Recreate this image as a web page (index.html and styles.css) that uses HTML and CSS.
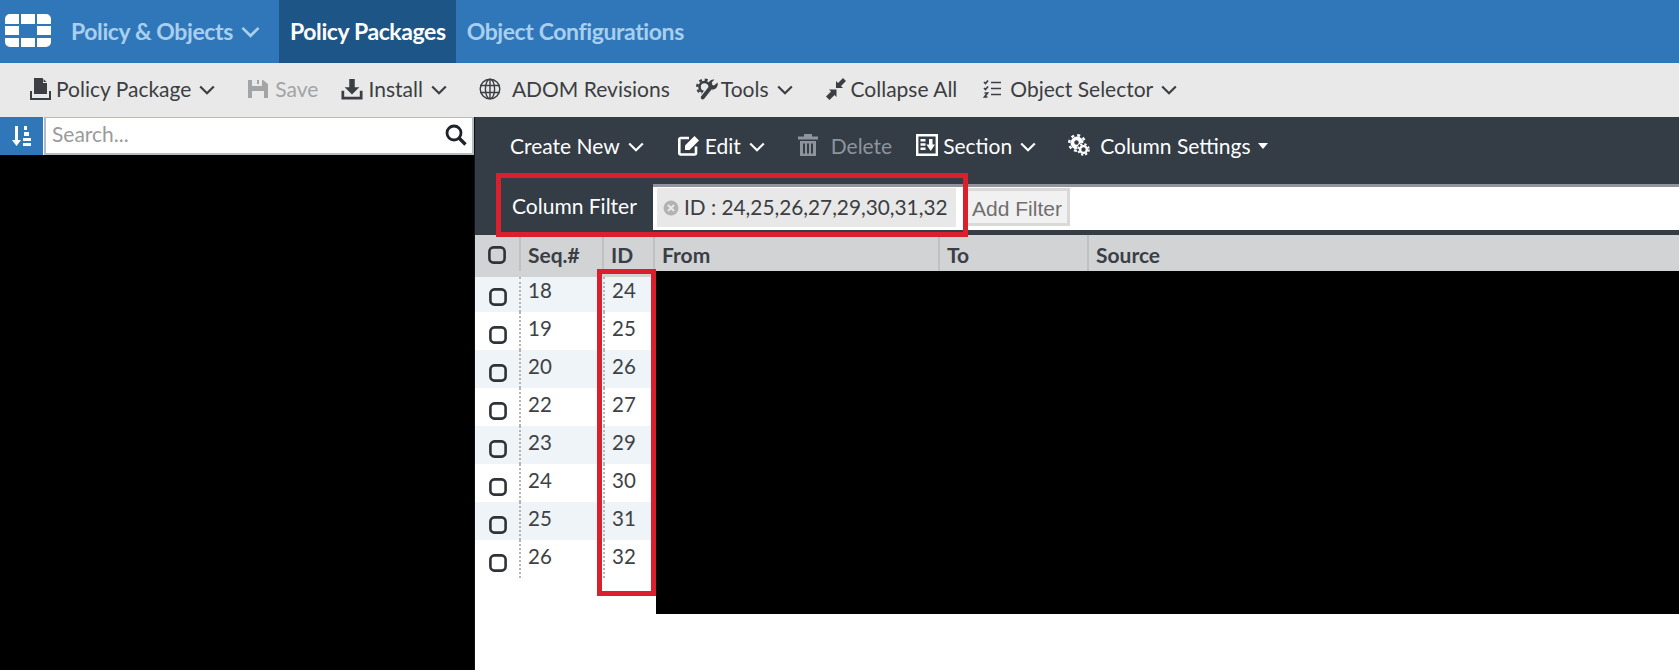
FILE: index.html
```html
<!DOCTYPE html>
<html lang="en">
<head>
<meta charset="utf-8">
<title>Policy Packages</title>
<link rel="stylesheet" href="styles.css">
</head>
<body>
<svg class="defs" width="0" height="0" aria-hidden="true">
  <symbol id="chev" viewBox="0 0 16 10"><path d="M1.2 1.5 8 8.2 14.8 1.5" fill="none" stroke="currentColor" stroke-width="2.2"/></symbol>
  <symbol id="box" viewBox="0 0 18 18"><rect x="1.4" y="1.4" width="15.2" height="15.2" rx="4" fill="none" stroke="currentColor" stroke-width="2.6"/></symbol>
</svg>
<div class="app">
  <header class="nav">
    <svg class="logo" viewBox="0 0 46 33">
      <path fill="#fff" d="M5 0h9v10H0V5a5 5 0 0 1 5-5zM16 0h14v10H16zM32 0h9a5 5 0 0 1 5 5v5H32zM0 12h14v9H0zM32 12h14v9H32zM0 24h14v9H5a5 5 0 0 1-5-5zM16 24h14v9H16zM32 24h14v4a5 5 0 0 1-5 5h-9z"/>
    </svg>
    <div class="nav-menu">Policy &amp; Objects<svg class="chev nav-chev"><use href="#chev"/></svg></div>
    <div class="nav-tab active">Policy Packages</div>
    <div class="nav-tab">Object Configurations</div>
  </header>

  <div class="toolbar">
    <div class="tool t1">
      <svg class="ic pkg" viewBox="0 0 22 24"><path fill="currentColor" d="M5 1h8.500L18 5.500V17H5z"/><path fill="none" stroke="currentColor" stroke-width="2" d="M2 14v8h19v-8"/><path fill="#e9e9e9" d="M14 0.500h1L19 5v1h-5z"/><path fill="currentColor" d="M14.500 2 17.500 5h-3z"/></svg>
      <span>Policy Package</span><svg class="chev"><use href="#chev"/></svg>
    </div>
    <div class="tool t2 muted">
      <svg class="ic save" viewBox="0 0 20 20"><path fill="currentColor" d="M0 1h15l5 4v14H0zM4 1v6h10V1h-3v4H9V1zM4 12v7h12v-7z"/></svg>
      <span>Save</span>
    </div>
    <div class="tool t3">
      <svg class="ic install" viewBox="0 0 24 24"><path fill="currentColor" d="M9 1h6v9h5l-8 8-8-8h5z"/><path fill="none" stroke="currentColor" stroke-width="3" d="M2 14v8h20v-8"/></svg>
      <span>Install</span><svg class="chev"><use href="#chev"/></svg>
    </div>
    <div class="tool t4">
      <svg class="ic globe" viewBox="0 0 22 22"><g fill="none" stroke="currentColor" stroke-width="1.4"><circle cx="11" cy="11" r="9.8"/><ellipse cx="11" cy="11" rx="4.6" ry="9.8"/><path d="M11 1v20M1.5 7.5h19M1.5 14.500h19"/></g></svg>
      <span>ADOM Revisions</span>
    </div>
    <div class="tool t5">
      <svg class="ic" viewBox="0 0 22 22">
        <g fill="none" stroke="currentColor">
          <circle cx="8.500" cy="9" r="5" stroke-width="2.600"/>
          <circle cx="8.500" cy="9" r="7.300" stroke-width="2.400" stroke-dasharray="3 2.730"/>
        </g>
        <path d="M7 19.500 15.500 8" fill="none" stroke="#e9e9e9" stroke-width="6.500"/>
        <path fill="currentColor" d="M21.500 4.500 18 7.500l-2.200-.8L15.500 4.500 18.500 1.500a5.500 5.500 0 0 0-6 7.500L5 18.500a2 2 0 0 0 3 2.500l7.500-9.500a5.500 5.500 0 0 0 6-7z"/>
      </svg>
      <span>Tools</span><svg class="chev"><use href="#chev"/></svg>
    </div>
    <div class="tool t6">
      <svg class="ic" viewBox="0 0 22 22"><path fill="currentColor" d="M1 18.500l5-5-2-2h7.500V19l-2-2-5 5zM21 3l-5 5 2 2h-7V3l2 2 5-5z"/></svg>
      <span>Collapse All</span>
    </div>
    <div class="tool t7">
      <svg class="ic list" viewBox="0 0 18 20"><path fill="none" stroke="currentColor" stroke-width="1.700" d="M1 3l1.500 1.500L5 1.500M1 9l1.500 1.500L5 7.500M1.500 14h3l-3 4h3M8 3.500h10M8 9.500h10M8 15.500h10"/></svg>
      <span>Object Selector</span><svg class="chev"><use href="#chev"/></svg>
    </div>
  </div>

  <div class="work">
    <aside class="side">
      <div class="side-top">
        <div class="sort">
          <svg class="sort-ic" viewBox="0 0 20 22"><path fill="#fff" d="M3 1h3v14h3l-4.500 6L0 15h3zM12 1h3v4h-3zM12 7h5v4h-5zM11 13h8v3h-8zM11 18h8v3h-8z"/></svg>
        </div>
        <div class="search">
          <span class="search-ph">Search...</span>
          <svg class="search-ic" viewBox="0 0 22 22"><circle cx="9" cy="9" r="7" fill="none" stroke="#1f2327" stroke-width="2.800"/><path d="M14 14l6.500 6.500" stroke="#1f2327" stroke-width="3.400" fill="none"/></svg>
        </div>
      </div>
      <div class="side-redact"></div>
    </aside>

    <main class="main">
      <div class="dark">
        <div class="actions">
          <div class="act a1"><span>Create New</span><svg class="chev"><use href="#chev"/></svg></div>
          <div class="act a2">
            <svg class="ic" viewBox="0 0 22 22"><path fill="none" stroke="currentColor" stroke-width="2.600" d="M18 12.500V19a1.500 1.500 0 0 1-1.500 1.500h-14A1.500 1.500 0 0 1 1.300 19V5.500A1.500 1.500 0 0 1 2.800 4H11"/><path fill="currentColor" d="M7 11.500 16.500 2l4.500 4.500L11.500 16H7z"/></svg>
            <span>Edit</span><svg class="chev"><use href="#chev"/></svg>
          </div>
          <div class="act a3 off">
            <svg class="ic" viewBox="0 0 22 24"><path fill="currentColor" fill-rule="evenodd" d="M7 1h8v2.500h6v3H1v-3h6zM3 8h16v15H3zM6 10.500V20.500h2V10.500zM10 10.500V20.500h2V10.500zM14 10.500V20.500h2V10.500z"/></svg>
            <span>Delete</span>
          </div>
          <div class="act a4">
            <svg class="ic" viewBox="0 0 22 22"><path fill="none" stroke="currentColor" stroke-width="2.400" d="M1.200 1.200h19.600v19.600H1.200z"/><path fill="currentColor" d="M4.500 5h5v2.500h-5zM4.500 9.300h5v2.500h-5zM4.500 13.600h5v2.500h-5zM13 5h3.500v5.500h2.500L14.700 17l-4.300-6.500H13z"/></svg>
            <span>Section</span><svg class="chev"><use href="#chev"/></svg>
          </div>
          <div class="act a5">
            <svg class="ic" viewBox="0 0 22 22">
              <circle cx="9" cy="9" r="6.500" fill="currentColor"/>
              <circle cx="9" cy="9" r="7.800" fill="none" stroke="currentColor" stroke-width="2.400" stroke-dasharray="3 3.120"/>
              <circle cx="8.500" cy="8.500" r="2.200" fill="#343c46"/>
              <circle cx="15.500" cy="15.500" r="6.800" fill="#343c46"/>
              <circle cx="15.500" cy="15.500" r="3.400" fill="none" stroke="currentColor" stroke-width="2.400"/>
              <circle cx="15.500" cy="15.500" r="5.300" fill="none" stroke="currentColor" stroke-width="2" stroke-dasharray="2.200 2"/>
            </svg>
            <span>Column Settings</span><i class="caret"></i>
          </div>
        </div>
        <div class="filter-row">
          <div class="filter-label">Column Filter</div>
          <div class="filter-field">
            <div class="chip">
              <svg class="chip-x" viewBox="0 0 16 16"><circle cx="8" cy="8" r="7.500" fill="#b3b3b3"/><path d="M5 5l6 6M11 5l-6 6" stroke="#e8e8e8" stroke-width="2"/></svg>
              <span>ID : 24,25,26,27,29,30,31,32</span>
            </div>
            <div class="add-filter">Add Filter</div>
          </div>
        </div>
      </div>

      <div class="table">
        <div class="thead">
          <div class="th th-check"><svg class="check"><use href="#box"/></svg></div>
          <div class="th">Seq.#</div>
          <div class="th">ID</div>
          <div class="th">From</div>
          <div class="th">To</div>
          <div class="th th-last">Source</div>
        </div>
        <div class="tbody">
          <div class="row"><div class="c-check"><svg class="check"><use href="#box"/></svg></div><div class="c-seq">18</div><div class="c-id">24</div></div>
          <div class="row"><div class="c-check"><svg class="check"><use href="#box"/></svg></div><div class="c-seq">19</div><div class="c-id">25</div></div>
          <div class="row"><div class="c-check"><svg class="check"><use href="#box"/></svg></div><div class="c-seq">20</div><div class="c-id">26</div></div>
          <div class="row"><div class="c-check"><svg class="check"><use href="#box"/></svg></div><div class="c-seq">22</div><div class="c-id">27</div></div>
          <div class="row"><div class="c-check"><svg class="check"><use href="#box"/></svg></div><div class="c-seq">23</div><div class="c-id">29</div></div>
          <div class="row"><div class="c-check"><svg class="check"><use href="#box"/></svg></div><div class="c-seq">24</div><div class="c-id">30</div></div>
          <div class="row"><div class="c-check"><svg class="check"><use href="#box"/></svg></div><div class="c-seq">25</div><div class="c-id">31</div></div>
          <div class="row"><div class="c-check"><svg class="check"><use href="#box"/></svg></div><div class="c-seq">26</div><div class="c-id">32</div></div>
        </div>
      </div>

      <div class="redact"></div>
      <div class="mark mark-filter"></div>
      <div class="mark mark-id"></div>
    </main>
  </div>
</div>
</body>
</html>
```

FILE: styles.css
```css
* { box-sizing: border-box; }
html, body { margin: 0; height: 100%; overflow: hidden; }
body { font-family: Lato, "Open Sans", sans-serif; font-size: 21px; color: #3b3e42; background: #fff; }
.defs { position: absolute; }
.app { width: 1679px; height: 670px; display: flex; flex-direction: column; }

.chev { width: 16px; height: 10px; flex: none; margin-left: 8px; margin-top: 3px; }

/* top nav */
.nav { height: 63px; flex: none; display: flex; align-items: stretch; background: #3077b9; font-size: 23px; font-weight: 700; color: #a9cfef; letter-spacing: -0.4px; }
.logo { width: 46px; height: 33px; margin: 14px 0 0 5px; flex: none; }
.nav-menu { display: flex; align-items: center; margin-left: 20px; width: 208px; padding-bottom: 2px; }
.nav-chev { width: 19px; height: 12px; margin-left: 8px; }
.nav-tab { display: flex; align-items: center; padding: 0 10px 2px 11px; }
.nav-tab.active { background: #1e5587; color: #fff; }

/* grey toolbar */
.toolbar { height: 54px; flex: none; display: flex; align-items: center; padding-bottom: 3px; background: #e9e9e9; color: #3b3e42; font-size: 21px; }
.tool { display: flex; align-items: center; }
.tool .ic { width: 22px; height: 22px; flex: none; margin-right: 5px; }
.tool .pkg { height: 24px; }
.muted { color: #a2a4a6; }
.t1 { margin-left: 29px; }
.t2 { margin-left: 33px; }
.tool.t2 .save { width: 20px; height: 20px; margin-right: 7px; }
.t3 { margin-left: 23px; }
.t4 { margin-left: 32px; }
.tool.t4 .ic { margin-right: 11px; }
.t5 { margin-left: 26px; }
.tool.t5 .ic { margin-right: 3px; }
.t6 { margin-left: 32px; }
.tool.t6 .ic { margin-right: 4px; }
.t7 { margin-left: 26px; }
.tool.t7 .list { width: 18px; height: 20px; margin-right: 9px; }

.work { flex: 1; display: flex; min-height: 0; }

/* sidebar */
.side { width: 474px; flex: none; display: flex; flex-direction: column; }
.side-top { height: 38px; flex: none; display: flex; background: #fff; }
.sort { width: 43px; flex: none; background: #3077b9; display: flex; align-items: center; justify-content: center; }
.sort-ic { width: 22px; height: 22px; }
.search { flex: 1; display: flex; align-items: center; justify-content: space-between; border: 2px solid #b4bcc3; border-top-width: 1px; padding: 0 5px 4px 6px; margin-left: 1px; }
.search-ph { color: #9b9b9b; }
.search-ic { width: 22px; height: 22px; margin-top: 3px; }
.side-redact { flex: 1; background: #000; }

/* main */
.main { flex: 1; position: relative; background: #fff; border-left: 1px solid #111; min-width: 0; }
.dark { background: #343c46; color: #fff; height: 118px; display: flex; flex-direction: column; }
.actions { height: 58px; flex: none; display: flex; align-items: center; padding-bottom: 2px; }
.act { display: flex; align-items: center; }
.act .ic { width: 22px; height: 22px; flex: none; margin-right: 7px; }
.a1 { margin-left: 35px; }
.a2 { margin-left: 34px; }
.act.a2 .ic { margin-right: 5px; }
.a3 { margin-left: 32px; }
.act.a3 .ic { margin-right: 12px; height: 24px; }
.off { color: #8d949b; }
.a4 { margin-left: 24px; }
.act.a4 .ic { margin-right: 5px; }
.a5 { margin-left: 32px; }
.act.a5 .ic { margin-right: 10px; }
.caret { width: 0; height: 0; border: 5px solid transparent; border-top: 6px solid #fff; border-bottom: 0; margin-left: 7px; margin-top: 2px; }

.filter-row { flex: none; height: 60px; padding: 9px 0 5px; display: flex; }
.filter-label { width: 178px; flex: none; padding: 0 0 3px 37px; display: flex; align-items: center; }
.filter-field { flex: 1; background: #fff; border-top: 3px solid #8f959b; display: flex; align-items: flex-start; padding: 1px 0 0 4px; color: #3b3e42; }
.chip { width: 299px; height: 39px; background: #e8e8e8; display: flex; align-items: center; padding: 0 0 3px 6px; flex: none; font-size: 20.800px; }
.chip-x { width: 16px; height: 16px; flex: none; margin-right: 5px; margin-top: 4px; }
.add-filter { margin-left: 9px; width: 105px; height: 38px; font-family: "Liberation Sans", Arial, sans-serif; font-size: 21px; color: #6f6f6f; background: #f1f1f1; border: 3px solid #d9d9d9; border-left-width: 2px; display: flex; align-items: center; justify-content: center; padding-top: 3px; }

/* table */
.thead { height: 42px; display: grid; grid-template-columns: 44px 83px 51px 285px 149px 1fr; background: #d2d3d5; font-weight: 700; color: #3a3f45; }
.th { height: 36px; border-left: 2px solid #c0c1c3; padding-left: 7px; line-height: 40px; }
.th-check { border-left: 0; padding: 0 0 0 13px; display: flex; align-items: center; height: 40px; }
.check { width: 18px; height: 18px; color: #2f3338; display: block; }
.th-last { border-right: 0; }
.row { width: 181px; height: 38px; display: flex; align-items: flex-start; padding-top: 5px; line-height: 25px; color: #3e4246; font-size: 20.500px; }
.row:first-child { height: 35px; padding-top: 2px; }
.row:nth-child(odd) { background: #eef4f7; }
.c-check { width: 44px; flex: none; padding: 9px 0 0 14px; }
.c-seq { width: 84px; flex: none; padding-left: 7px; border-left: 2px dotted #b4b4b4; height: 38px; margin-top: -5px; padding-top: 4px; }
.c-id { flex: 1; padding-left: 7px; border-left: 2px dotted #b4b4b4; height: 38px; margin-top: -5px; padding-top: 4px; }
.row:first-child .c-seq, .row:first-child .c-id { height: 35px; margin-top: -2px; padding-top: 1px; }

/* redaction and annotations */
.redact { position: absolute; left: 181px; top: 154px; right: 0; height: 343px; background: #000; }
.mark { position: absolute; border: 5px solid #da1f2d; pointer-events: none; }
.mark-filter { left: 21px; top: 56px; width: 472px; height: 64px; }
.mark-id { left: 122px; top: 152px; width: 59px; height: 327px; }
```
